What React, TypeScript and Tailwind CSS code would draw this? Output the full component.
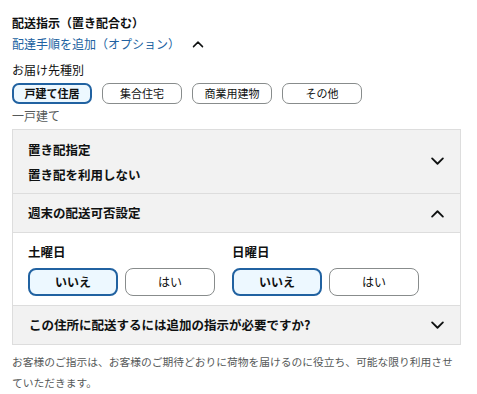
import React, { useState } from "react";

const Chevron = ({ up = false, className = "" }: { up?: boolean; className?: string }) => (
  <svg
    viewBox="0 0 16 10"
    className={className}
    fill="none"
    stroke="#0f1111"
    strokeWidth={2}
    strokeLinecap="round"
    strokeLinejoin="round"
  >
    {up ? <path d="M2 8.5 8 2.5l6 6" /> : <path d="M2 1.5 8 7.5l6-6" />}
  </svg>
);

const TYPES = ["戸建て住居", "集合住宅", "商業用建物", "その他"];

export default function App() {
  const [type, setType] = useState(0);
  const [sat, setSat] = useState(false);
  const [sun, setSun] = useState(false);

  const dayButtons = (value: boolean, setValue: (v: boolean) => void) => (
    <div className="flex gap-[7px] mt-[6px]">
      <button
        onClick={() => setValue(false)}
        className={
          !value
            ? "w-[90px] h-[28px] rounded-[8px] border-2 border-[#2162a1] bg-[#edf8ff] text-[12px] font-bold text-[#0f1111]"
            : "w-[90px] h-[28px] rounded-[8px] border border-[#888c8c] bg-white text-[12px] text-[#0f1111]"
        }
      >
        いいえ
      </button>
      <button
        onClick={() => setValue(true)}
        className={
          value
            ? "w-[90px] h-[28px] rounded-[8px] border-2 border-[#2162a1] bg-[#edf8ff] text-[12px] font-bold text-[#0f1111]"
            : "w-[90px] h-[28px] rounded-[8px] border border-[#888c8c] bg-white text-[12px] text-[#0f1111]"
        }
      >
        はい
      </button>
    </div>
  );

  return (
    <div className="min-h-screen bg-white px-[12px] pt-[13px] text-[#0f1111] font-['Noto_Sans_CJK_JP',sans-serif]">
      <h1 className="text-[12px] font-bold leading-[20px]">配送指示（置き配合む）</h1>
      <div className="flex items-center gap-[12px] mt-[1px] text-[12px] leading-[20px] text-[#2162a1]">
        <span>配達手順を追加（オプション）</span>
        <Chevron up className="w-[12px] h-[8px]" />
      </div>

      <div className="mt-[6px] text-[12px] leading-[20px]">お届け先種別</div>
      <div className="flex gap-[10px] mt-[3px]">
        {TYPES.map((t, i) => (
          <button
            key={t}
            onClick={() => setType(i)}
            className={
              i === type
                ? "w-[80px] h-[21px] rounded-[7px] border-2 border-[#2162a1] bg-[#edf8ff] text-[11px] font-bold leading-none"
                : "w-[80px] h-[21px] rounded-[7px] border border-[#888c8c] bg-white text-[11px] leading-none"
            }
          >
            {t}
          </button>
        ))}
      </div>
      <div className="mt-[2px] text-[12px] leading-[20px] text-[#565959]">一戸建て</div>

      <div className="w-[449px] mt-[3px] border border-[#dddddd] bg-[#f2f2f2]">
        <div className="flex items-center justify-between pl-[15px] pr-[15px] h-[64px] border-b border-[#dddddd]">
          <div className="text-[12.5px] font-bold leading-[25px]">
            <div>置き配指定</div>
            <div>置き配を利用しない</div>
          </div>
          <Chevron className="w-[15px] h-[9px]" />
        </div>
        <div className="flex items-center justify-between pl-[15px] pr-[15px] h-[39px] border-b border-[#dddddd]">
          <div className="text-[12.5px] font-bold leading-[20px]">週末の配送可否設定</div>
          <Chevron up className="w-[15px] h-[9px]" />
        </div>
        <div className="flex bg-white pl-[15px] pt-[9px] h-[73px] border-b border-[#dddddd]">
          <div className="w-[204px]">
            <div className="text-[12.5px] font-bold leading-[20px]">土曜日</div>
            {dayButtons(sat, setSat)}
          </div>
          <div className="w-[204px]">
            <div className="text-[12.5px] font-bold leading-[20px]">日曜日</div>
            {dayButtons(sun, setSun)}
          </div>
        </div>
        <div className="flex items-center justify-between pl-[16px] pr-[15px] h-[38px]">
          <div className="text-[12.5px] font-bold leading-[20px]">この住所に配送するには追加の指示が必要ですか?</div>
          <Chevron className="w-[15px] h-[9px]" />
        </div>
      </div>

      <p className="mt-[6px] text-[10.75px] leading-[21px] text-[#565959] whitespace-nowrap">
        お客様のご指示は、お客様のご期待どおりに荷物を届けるのに役立ち、可能な限り利用させ
        <br />
        ていただきます。
      </p>
    </div>
  );
}
